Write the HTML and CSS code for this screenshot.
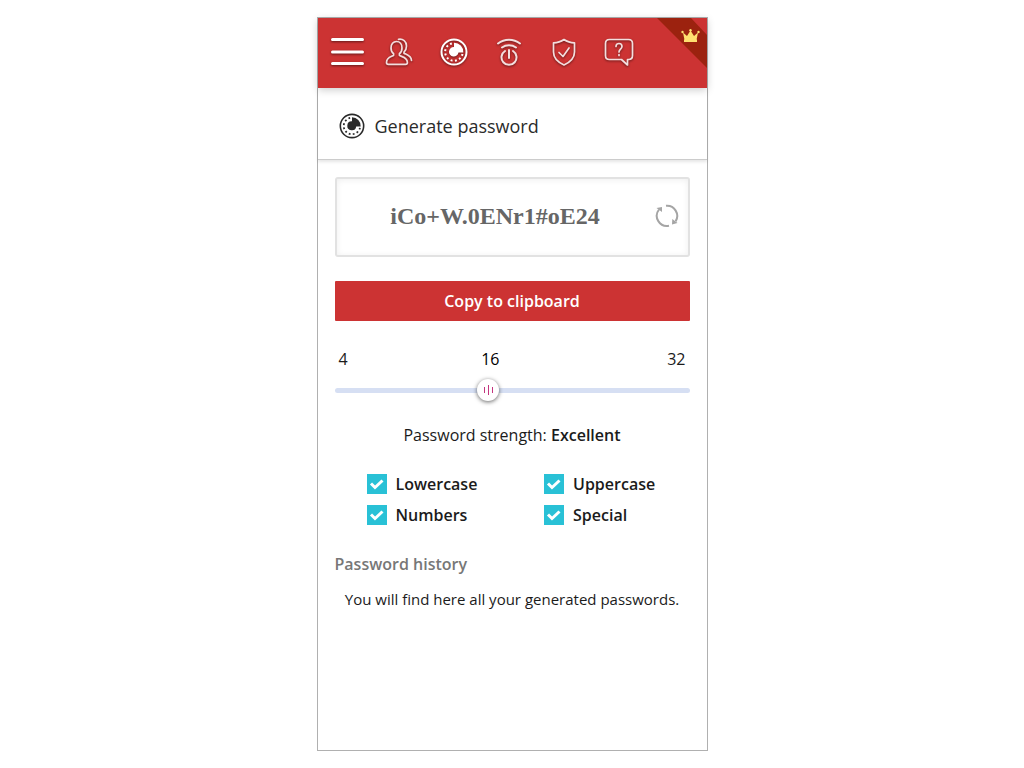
FILE: index.html
```html
<!DOCTYPE html>
<html lang="en">
<head>
<meta charset="utf-8">
<meta name="viewport" content="width=device-width, initial-scale=1">
<title>Generate password</title>
<link rel="stylesheet" href="styles.css">
</head>
<body>
<main class="panel">
  <header class="topbar">
    <button class="menu" aria-label="Menu"><svg width="34" height="32" viewBox="0 0 34 32"><path d="M2.500 3.500h30M2.500 16h30M2.500 27.500h30" stroke-width="3"/></svg></button>
    <nav class="tabs">
      <a class="tab" href="#accounts" aria-label="Accounts"><svg width="30" height="30" viewBox="0 0 30 30"><path d="M12.500 4.500c3.300 0 5.500 2.700 5.500 6.400 0 2.500-1 4.700-2.600 5.900v1.500c1.500 1.400 8 1.700 8 7.200 0 1.200-.7 1.800-1.800 1.800H4.300c-1.100 0-1.800-.6-1.800-1.800 0-5.500 5.600-5.800 7.100-7.200v-1.500C8 15.600 7 13.400 7 10.900c0-3.700 2.200-6.400 5.500-6.400zM14.500 2.300c4.500-.8 8 2.200 8 6.700 0 2.600-1 4.800-2.500 6.200v1c2 1.300 7.300 2 7.500 7.300"/></svg></a>
      <a class="tab active" href="#generate" aria-label="Generate password"><svg width="30" height="30" viewBox="0 0 30 30"><circle cx="15" cy="15" r="12.500" stroke-width="2"/><path d="M23.500 17a8.800 8.800 0 1 1-10.500-10.600" stroke-width="2" stroke-dasharray="1.900 2.500"/><path class="solid" d="M15 5.700a9.300 9.300 0 0 1 9.300 9.800h-4.800a4.800 4.800 0 1 1-4.500-5.500z"/></svg></a>
      <a class="tab" href="#one-time" aria-label="One-time password"><svg width="30" height="30" viewBox="0 0 30 30"><path d="M4 6.500C10.500 1.500 19.500 1.500 26 6.500M8 10.500c4-3 10-3 14 0M15 13v8M11 14a7.500 7.500 0 1 0 8 0" stroke-width="2"/></svg></a>
      <a class="tab" href="#security" aria-label="Security"><svg width="30" height="30" viewBox="0 0 30 30"><path d="M15 2.500c3 2.200 6.500 3.300 10.500 3.300V15c0 6-4 10-10.500 13C8.500 25 4.500 21 4.500 15V5.800C8.500 5.800 12 4.700 15 2.500zM10 15.500l4 4 6-8.500"/></svg></a>
      <a class="tab" href="#help" aria-label="Help"><svg width="30" height="30" viewBox="0 0 30 30"><path d="M5.500 2.500h19q4 0 4 4v12q0 4-4 4h-1V28l-6-5.500h-12q-4 0-4-4v-12q0-4 4-4zM12 9.500c0-4 6-4 6 0 0 2.500-3 2.800-3 5.500M15 17.500v1"/></svg></a>
    </nav>
    <a class="ribbon" href="#premium" aria-label="Premium"><svg width="50" height="50" viewBox="0 0 50 50"><path class="fold" d="M0 0h34l16 17v33z"/><path class="crown" d="M26 14.500l4 3.500 3.500-5.500L37 18l4-3.500-1.500 7.500h-12zM27 21.500h13v2.500h-13z"/><circle class="crown" cx="25.500" cy="14" r="1.200"/><circle class="crown" cx="33.500" cy="12.200" r="1.200"/><circle class="crown" cx="41.500" cy="14" r="1.200"/></svg></a>
  </header>

  <div class="heading">
    <svg class="dark" width="28" height="28" viewBox="0 0 30 30"><circle cx="15" cy="15" r="12.500" stroke-width="1.700"/><path d="M23.500 17a8.800 8.800 0 1 1-10.500-10.600" stroke-width="1.900" stroke-dasharray="1.900 2.500"/><path class="solid" d="M15 5.700a9.300 9.300 0 0 1 9.300 9.800h-4.800a4.800 4.800 0 1 1-4.500-5.500z"/></svg>
    <h1>Generate password</h1>
  </div>

  <form class="content">
    <div class="password">
      <output class="value">iCo+W.0ENr1#oE24</output>
      <button class="refresh" type="button" aria-label="Generate again"><svg width="26" height="26" viewBox="0 0 26 26"><path d="M12 2.800a10.200 10.200 0 0 1 9.600 15.600M15 22.800A10.200 10.200 0 0 1 5 6.500"/><path class="tip" d="M2.500 5l5.500-1v5zM23.500 20l-5.500 1.500.3-5.500z"/></svg></button>
    </div>
    <button class="copy" type="button">Copy to clipboard</button>

    <div class="scale"><span>4</span><span class="current">16</span><span>32</span></div>
    <input class="slider" type="range" min="4" max="32" value="16" aria-label="Password length">

    <p class="strength">Password strength: <strong>Excellent</strong></p>

    <div class="options">
      <label class="option"><input type="checkbox" checked>Lowercase</label>
      <label class="option"><input type="checkbox" checked>Uppercase</label>
      <label class="option"><input type="checkbox" checked>Numbers</label>
      <label class="option"><input type="checkbox" checked>Special</label>
    </div>

    <h2>Password history</h2>
    <p class="empty">You will find here all your generated passwords.</p>
  </form>
</main>
</body>
</html>
```
FILE: styles.css
```css
* { box-sizing: border-box; }
body {
  margin: 0;
  min-height: 100vh;
  padding: 17px 0;
  background: #fff;
  color: #1b1b1b;
  font: 16px/24px "Open Sans", "Noto Sans", sans-serif;
}
button { font: inherit; border: 0; padding: 0; background: none; cursor: pointer; }
svg { display: block; fill: none; }
h1, h2, p { margin: 0; }

.panel {
  max-width: 391px;
  min-height: calc(100vh - 34px);
  margin: 0 auto;
  border: 1px solid #b0b0b0;
}

.topbar {
  position: relative;
  display: flex;
  align-items: center;
  gap: 20px;
  height: 70px;
  padding: 0 12px 3px;
  background: #cc3333;
  box-shadow: 0 2px 8px rgba(0, 0, 0, .2);
}
.topbar svg { stroke: #f3dede; stroke-width: 1.700; stroke-linecap: round; stroke-linejoin: round; }
.menu svg, .tab svg { filter: drop-shadow(0 1px 1px rgba(0, 0, 0, .5)); }
.topbar .menu svg, .topbar .active svg { stroke: #fff; }
.topbar .active svg { stroke-linecap: butt; }
.tabs { display: flex; gap: 25px; }
.solid { fill: #fff; stroke: none; }

.ribbon { position: absolute; top: 0; right: 0; }
.topbar .ribbon svg { stroke: none; }
.fold { fill: #9c220f; }
.crown { fill: #ffe070; }

.heading {
  display: flex;
  align-items: center;
  gap: 9px;
  height: 72px;
  padding: 4px 20px 0;
  border-bottom: 1px solid #ccc;
  box-shadow: 0 2px 3px rgba(0, 0, 0, .1);
}
.heading h1 { font-size: 18px; font-weight: 400; line-height: 28px; color: #2b2b2b; }
.dark { stroke: #2a2a2a; }
.dark .solid { fill: #2a2a2a; }

.content { display: flex; flex-direction: column; padding: 17px; }
.password {
  display: flex;
  align-items: center;
  height: 80px;
  padding: 0 8px 2px 0;
  border: 2px solid #e2e2e2;
  border-radius: 3px;
  box-shadow: inset 0 1px 6px rgba(0, 0, 0, .07);
}
.value { flex: 1; text-align: center; font: bold 24px/30px "Liberation Serif", serif; color: #666; }
.refresh svg { stroke: #a5a5a5; stroke-width: 2; }
.tip { fill: #a5a5a5; stroke: none; }

.copy {
  height: 40px;
  margin-top: 24px;
  border-radius: 1px;
  background: #cc3333;
  color: #fff;
  font-weight: 600;
}

.scale { display: grid; grid-template-columns: 3fr 1fr 4fr; margin-top: 26px; padding: 0 4px; }
.scale .current { text-align: center; color: #000; }
.scale span:last-child { text-align: right; }

.slider {
  appearance: none;
  width: 100%;
  height: 24px;
  margin: 7px 0 0;
  background: none;
}
.slider::-webkit-slider-runnable-track { height: 5px; border-radius: 3px; background: #d6dff3; }
.slider::-webkit-slider-thumb {
  appearance: none;
  width: 22px;
  height: 22px;
  margin-top: -9px;
  border-radius: 50%;
  background:
    linear-gradient(#c4357f, #c4357f) 7px 8px / 1px 6px no-repeat,
    linear-gradient(#c4357f, #c4357f) 11px 6px / 1px 10px no-repeat,
    linear-gradient(#c4357f, #c4357f) 15px 8px / 1px 6px no-repeat,
    #fff;
  box-shadow: 0 1px 4px rgba(0, 0, 0, .6);
}

.strength { margin-top: 21px; text-align: center; }
strong { font-weight: 600; }

.options {
  display: grid;
  grid-template-columns: 1fr 1fr;
  row-gap: 7px;
  margin-top: 25px;
}
.option { display: flex; align-items: center; gap: 9px; padding-left: 32px; font-weight: 600; }
.option input {
  appearance: none;
  width: 20px;
  height: 20px;
  margin: 0;
  background: #29c1d6 url("data:image/svg+xml,%3Csvg xmlns='http://www.w3.org/2000/svg' viewBox='0 0 20 20'%3E%3Cpath d='M4 9.500l4 4 7.500-7' fill='none' stroke='white' stroke-width='3'/%3E%3C/svg%3E") center / 20px;
}

.content h2 { margin-top: 25px; font-size: 16px; font-weight: 600; line-height: 24px; color: #777; }
.empty { margin-top: 11px; text-align: center; font-size: 15px; }
```
